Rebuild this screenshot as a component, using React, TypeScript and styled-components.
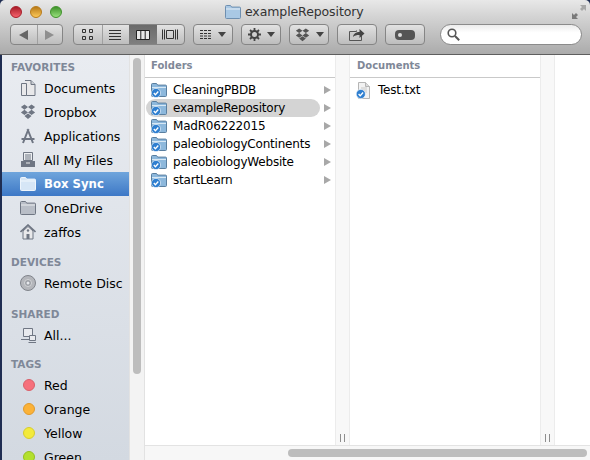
import React from 'react';
import styled, { createGlobalStyle } from 'styled-components';

const GlobalStyle = createGlobalStyle`
  html, body {
    margin: 0;
    padding: 0;
    height: 460px;
    overflow: hidden;
    background: #1f2d52;
  }
`;

const Window = styled.div`
  width: 590px;
  height: 460px;
  overflow: hidden;
  display: flex;
  flex-direction: column;
  font-family: 'DejaVu Sans', sans-serif;
  font-size: 12px;
  color: #000;
  border-radius: 5px 5px 0 0;
`;

const Header = styled.header`
  height: 55px;
  box-sizing: border-box;
  flex: none;
  background: linear-gradient(#e8e8e8, #d4d4d4 30%, #ababab);
  border-bottom: 1px solid #5e5e5e;
`;

const TitleRow = styled.div`
  height: 24px;
  display: flex;
  align-items: center;
  padding: 0 4px 1px 10px;
  box-sizing: border-box;
`;

const Lights = styled.div`
  display: flex;
  gap: 8px;
  width: 215px;
`;

const Light = styled.span<{ $color: string; $dark: string }>`
  width: 12px;
  height: 12px;
  border-radius: 50%;
  box-sizing: border-box;
  border: 1px solid ${({ $dark }) => $dark};
  background: linear-gradient(${({ $dark }) => $dark}, ${({ $color }) => $color});
`;

const Title = styled.div`
  display: flex;
  align-items: center;
  gap: 4px;
  font-size: 12.5px;
  letter-spacing: -0.1px;
  color: #333;
  flex: 1;
`;

const Toolbar = styled.div`
  display: flex;
  align-items: center;
  height: 21px;
  padding-left: 10px;
`;

const Group = styled.div<{ $width: number; $gap: number }>`
  width: ${({ $width }) => $width}px;
  height: 21px;
  margin-right: ${({ $gap }) => $gap}px;
  box-sizing: border-box;
  border: 1px solid #858585;
  border-radius: 4px;
  background: linear-gradient(#e2e2e2, #bdbdbd);
  display: flex;
  overflow: hidden;
`;

const Segment = styled.div<{ $active?: boolean; $line?: boolean }>`
  flex: 1;
  display: flex;
  align-items: center;
  justify-content: center;
  gap: 6px;
  background: ${({ $active }) =>
    $active ? 'linear-gradient(#6b6b6b, #7f7f7f)' : 'transparent'};
  box-shadow: ${({ $line }) => ($line ? '1px 0 0 #a0a0a0 inset' : 'none')};
`;

const Search = styled.div`
  width: 142px;
  height: 21px;
  margin-left: 6px;
  box-sizing: border-box;
  border: 1px solid #8b8b8b;
  border-radius: 11px;
  background: linear-gradient(#ececec, #fff 40%);
  display: flex;
  align-items: center;
  padding-left: 6px;
`;

const Body = styled.div`
  flex: 1;
  min-height: 0;
  display: flex;
  padding-left: 2px;
`;

const Sidebar = styled.nav`
  width: 127px;
  flex: none;
  background: linear-gradient(#e9ecf1, #d3d9e1);
  overflow: hidden;
`;

const SidebarTrack = styled.div`
  width: 16px;
  flex: none;
  box-sizing: border-box;
  padding: 3px 3px 0;
  background: #f3f3f3;
  border-left: 1px solid #e2e2e2;
  border-right: 1px solid #e2e2e2;
`;

const SidebarThumb = styled.div`
  height: 316px;
  border-radius: 4px;
  background: #bdbdbd;
`;

const SectionTitle = styled.h3`
  margin: 0;
  padding: 2px 0 0 9px;
  height: 21px;
  box-sizing: border-box;
  display: flex;
  align-items: center;
  font-size: 10.5px;
  font-weight: bold;
  color: #7f8898;
`;

const SideSection = styled.section<{ $after: number }>`
  margin-bottom: ${({ $after }) => $after}px;
`;

const SideItem = styled.div<{ $selected?: boolean }>`
  height: 24px;
  display: flex;
  align-items: center;
  padding-left: 18px;
  gap: 8px;
  background: ${({ $selected }) =>
    $selected ? 'linear-gradient(#6fa5dc, #3d78c6)' : 'transparent'};
  color: ${({ $selected }) => ($selected ? '#fff' : '#000')};
  font-weight: ${({ $selected }) => ($selected ? 'bold' : 'normal')};
  font-size: ${({ $selected }) => ($selected ? '11.7px' : '12.5px')};
  & > svg {
    flex: none;
  }
`;

const TagDot = styled.span<{ $color: string; $edge: string }>`
  width: 12px;
  height: 12px;
  margin: 0 1px 0 3px;
  border-radius: 50%;
  box-sizing: border-box;
  border: 1px solid ${({ $edge }) => $edge};
  background: ${({ $color }) => $color};
  flex: none;
`;

const Main = styled.div`
  flex: 1;
  min-width: 0;
  display: flex;
  flex-direction: column;
  background: #fff;
`;

const Columns = styled.div`
  flex: 1;
  min-height: 0;
  display: flex;
`;

const Column = styled.div`
  width: 190px;
  flex: none;
`;

const ColumnHeader = styled.div<{ $inset: number }>`
  height: 23px;
  box-sizing: border-box;
  padding-left: ${({ $inset }) => $inset}px;
  padding-bottom: 2px;
  display: flex;
  align-items: center;
  font-size: 10px;
  font-weight: bold;
  color: #7f8898;
  border-bottom: 1px solid #c9c9c9;
`;

const RowList = styled.div`
  padding: 3px 4px 0 1px;
`;

const Row = styled.div<{ $selected?: boolean }>`
  height: 18px;
  display: flex;
  align-items: center;
  padding-left: 5px;
  gap: 6px;
  position: relative;
  letter-spacing: -0.2px;
  &::before {
    content: '';
    display: ${({ $selected }) => ($selected ? 'block' : 'none')};
    position: absolute;
    left: 0;
    top: 0;
    width: 174px;
    height: 18px;
    border-radius: 9px;
    background: #d4d4d4;
  }
  & > * {
    position: relative;
  }
`;

const RowName = styled.span`
  flex: 1;
  white-space: nowrap;
`;

const Arrow = styled.span`
  width: 0;
  height: 0;
  margin-right: 0;
  border-left: 7px solid #a8a8a8;
  border-top: 4px solid transparent;
  border-bottom: 4px solid transparent;
`;

const Divider = styled.div`
  width: 15px;
  flex: none;
  box-sizing: border-box;
  background: #f8f8f8;
  border-left: 1px solid #ececec;
  border-right: 1px solid #ececec;
  display: flex;
  align-items: flex-end;
  justify-content: center;
  gap: 3px;
  padding-bottom: 3px;
`;

const Grip = styled.span`
  width: 1px;
  height: 8px;
  background: #8e8e8e;
`;

const HScroll = styled.div`
  height: 15px;
  flex: none;
  box-sizing: border-box;
  padding: 3px 3px 0 143px;
  background: #f7f7f7;
  border-top: 1px solid #e3e3e3;
`;

const HThumb = styled.div`
  height: 8px;
  border-radius: 4px;
  background: #bdbdbd;
`;

const ico = '#6f7683';

const FolderGlyph = ({ fill = '#a9c8e4', edge = '#6e8fb0' }: { fill?: string; edge?: string }) => (
  <svg width="16" height="14" viewBox="0 0 16 14">
    <path d="M.5 3V1.500a1 1 0 0 1 1-1h4l1.200 1.600h7.800a1 1 0 0 1 1 1V12.500a1 1 0 0 1-1 1h-13a1 1 0 0 1-1-1z" fill={fill} stroke={edge} />
    <path d="M1 4h14" stroke="#fff" strokeOpacity=".7" />
  </svg>
);

const Check = ({ x, y }: { x: number; y: number }) => (
  <g>
    <circle cx={x} cy={y} r="4.600" fill="#2f7fd0" stroke="#fff" strokeWidth=".6" />
    <path d={`M${x - 2.2} ${y}l1.600 1.700 2.900-3.200`} fill="none" stroke="#fff" strokeWidth="1.300" />
  </g>
);

const SyncFolder = () => (
  <svg width="16" height="16" viewBox="0 0 16 16">
    <path d="M.5 4V2.500a1 1 0 0 1 1-1h4l1.200 1.600h7.800a1 1 0 0 1 1 1v9.400a1 1 0 0 1-1 1h-13a1 1 0 0 1-1-1z" fill="#8db8dc" stroke="#5a7f9f" />
    <path d="M1 5.500h14" stroke="#d8e8f4" />
    <Check x={5} y={11} />
  </svg>
);

const SyncDoc = () => (
  <svg width="16" height="17" viewBox="0 0 16 17">
    <path d="M2.500.5h7l4 4v12h-11z" fill="#f2f2f2" stroke="#b5b5b5" />
    <path d="M9.500.5v4h4" fill="#dcdcdc" stroke="#b5b5b5" />
    <path d="M5 6h6M5 8h6M8 10h3" stroke="#c8c8c8" />
    <Check x={4.8} y={12} />
  </svg>
);

const DropboxGlyph = ({ color = ico, w = 16, h = 16 }: { color?: string; w?: number; h?: number }) => (
  <svg width={w} height={h} viewBox="0 0 18 16" fill={color} preserveAspectRatio="none">
    <path d="M5 .5 9 3 5 5.800 1 3zM13 .5 17 3l-4 2.800L9 3zM5 5.800 9 8.500 5 11 1 8.500zM13 5.800l4 2.700-4 2.500-4-2.500zM5 12l4-2.600L13 12l-4 3-4-3z" />
  </svg>
);

const favourites = [
  {
    name: 'Documents',
    icon: (
      <svg width="16" height="16" viewBox="0 0 16 16">
        <path d="M1.500 3.500h5v12h-5zM5 .5h6l4 4v11H6.500" fill="#e8e8ea" stroke={ico} />
        <path d="M11 .5v4h4" fill="#c8ccd2" stroke={ico} />
      </svg>
    ),
  },
  { name: 'Dropbox', icon: <DropboxGlyph /> },
  {
    name: 'Applications',
    icon: (
      <svg width="16" height="16" viewBox="0 0 16 16" fill="none" stroke={ico} strokeWidth="2">
        <path d="M8.500 1 3 15M7.500 1 13 15M1.500 11h13" />
      </svg>
    ),
  },
  {
    name: 'All My Files',
    icon: (
      <svg width="16" height="16" viewBox="0 0 16 16">
        <path d="M3.500.5h9v8h-9z" fill="#eceef1" stroke={ico} />
        <path d="M5 3h6M5 5h6M5 7h6" stroke={ico} />
        <path d="M1 9h14v6H1z" fill={ico} />
        <path d="M6 11h4" stroke="#eee" />
      </svg>
    ),
  },
  { name: 'Box Sync', selected: true, icon: <FolderGlyph fill="#d6e6f6" edge="#eef5fc" /> },
  { name: 'OneDrive', icon: <FolderGlyph fill="#b9bec7" edge="#6f7683" /> },
  {
    name: 'zaffos',
    icon: (
      <svg width="16" height="16" viewBox="0 0 16 16">
        <path d="M3 7v8h10V7L8 2.500z" fill="#e8e8ea" stroke={ico} />
        <path d="M.5 8 8 1l7.500 7" fill="none" stroke={ico} strokeWidth="1.600" />
        <path d="M6.500 10h3v5h-3z" fill={ico} />
        <circle cx="8" cy="6.500" r="1.200" fill={ico} />
      </svg>
    ),
  },
];

const folders = [
  'CleaningPBDB',
  'exampleRepository',
  'MadR06222015',
  'paleobiologyContinents',
  'paleobiologyWebsite',
  'startLearn',
];

const tags = [
  { name: 'Red', color: '#f6707c', edge: '#d9606a' },
  { name: 'Orange', color: '#fbb238', edge: '#e09a2c' },
  { name: 'Yellow', color: '#f3ea3c', edge: '#d6cd30' },
  { name: 'Green', color: '#b3e02e', edge: '#96c022' },
];

const Caret = () => (
  <svg width="8" height="5" viewBox="0 0 8 5">
    <path d="M0 0h8L4 5z" fill="#444" />
  </svg>
);

export default function App() {
  return (
    <>
      <GlobalStyle />
      <Window>
        <Header>
          <TitleRow>
            <Lights>
              <Light $color="#f5626c" $dark="#a81c28" />
              <Light $color="#fcc858" $dark="#b87a18" />
              <Light $color="#98e07c" $dark="#3f922a" />
            </Lights>
            <Title>
              <FolderGlyph />
              exampleRepository
            </Title>
            <svg width="14" height="14" viewBox="0 0 14 14">
              <path d="M8 0h6v6l-2-2-2 2-2-2 2-2z" fill="#a8a8a8" />
              <path d="M6 14H0V8l2 2 2-2 2 2-2 2z" fill="#7a7a7a" />
            </svg>
          </TitleRow>
          <Toolbar>
            <Group $width={53} $gap={10}>
              <Segment>
                <svg width="9" height="10" viewBox="0 0 9 10"><path d="M9 0v10L0 5z" fill="#666" /></svg>
              </Segment>
              <Segment $line>
                <svg width="9" height="10" viewBox="0 0 9 10"><path d="M0 0v10l9-5z" fill="#8f8f8f" /></svg>
              </Segment>
            </Group>
            <Group $width={112} $gap={8}>
              <Segment>
                <svg width="11" height="11" viewBox="0 0 11 11" fill="none" stroke="#333">
                  <path d="M.5.500h3v3h-3zM7.500.500h3v3h-3zM.5 7.500h3v3h-3zM7.500 7.500h3v3h-3z" />
                </svg>
              </Segment>
              <Segment $line>
                <svg width="12" height="11" viewBox="0 0 12 11" stroke="#333">
                  <path d="M0 1.500h12M0 4.500h12M0 7.500h12M0 10.500h12" />
                </svg>
              </Segment>
              <Segment $active>
                <svg width="14" height="10" viewBox="0 0 14 10" fill="#e8e8e8" stroke="#222">
                  <path d="M.5.500h13v9H.5zM4.800.500v9M9.200.500v9" />
                </svg>
              </Segment>
              <Segment>
                <svg width="16" height="11" viewBox="0 0 16 11" fill="none" stroke="#333">
                  <path d="M.5.500v10M2.500.500v10M13.500.500v10M15.500.500v10M4.500 1.500h7v8h-7z" />
                </svg>
              </Segment>
            </Group>
            <Group $width={40} $gap={8}>
              <Segment>
                <svg width="12" height="11" viewBox="0 0 12 11" stroke="#333" fill="none">
                  <path d="M0 1.500h12M0 4.500h12M0 7h12M0 9.500h12" strokeDasharray="3 1" />
                </svg>
                <Caret />
              </Segment>
            </Group>
            <Group $width={40} $gap={8}>
              <Segment>
                <svg width="13" height="13" viewBox="0 0 13 13">
                  <circle cx="6.500" cy="6.500" r="3.500" fill="none" stroke="#444" strokeWidth="2" />
                  <path d="M6.500 0v3M6.500 10v3M0 6.500h3M10 6.500h3M2 2l2 2M9 9l2 2M2 11l2-2M9 4l2-2" stroke="#444" strokeWidth="1.800" />
                </svg>
                <Caret />
              </Segment>
            </Group>
            <Group $width={40} $gap={8}>
              <Segment>
                <DropboxGlyph color="#555" w={15} h={14} />
                <Caret />
              </Segment>
            </Group>
            <Group $width={40} $gap={8}>
              <Segment>
                <svg width="16" height="13" viewBox="0 0 16 13">
                  <path d="M.5 3.500h7v-1M12.500 8v4.500H.5v-9" fill="#c8c8c8" stroke="#555" />
                  <path d="M4 9c.5-3.500 3-5 6.500-5V1l5 4.500-5 4.500V7c-3 0-5 .5-6.500 2z" fill="#444" />
                </svg>
              </Segment>
            </Group>
            <Group $width={40} $gap={9}>
              <Segment>
                <svg width="20" height="10" viewBox="0 0 20 10">
                  <rect width="20" height="10" rx="4" fill="#555" />
                  <circle cx="5" cy="5" r="2" fill="#ddd" />
                </svg>
              </Segment>
            </Group>
            <Search>
              <svg width="13" height="13" viewBox="0 0 13 13" fill="none" stroke="#555" strokeWidth="1.600">
                <circle cx="5" cy="5" r="3.800" />
                <path d="M8 8l4.200 4.200" strokeWidth="2" />
              </svg>
            </Search>
          </Toolbar>
        </Header>
        <Body>
          <Sidebar>
            <SideSection $after={6}>
              <SectionTitle>FAVORITES</SectionTitle>
              {favourites.map((item) => (
                <SideItem key={item.name} $selected={item.selected}>
                  {item.icon}
                  {item.name}
                </SideItem>
              ))}
            </SideSection>
            <SideSection $after={7}>
              <SectionTitle>DEVICES</SectionTitle>
              <SideItem>
                <svg width="16" height="16" viewBox="0 0 16 16">
                  <circle cx="8" cy="8" r="7.500" fill="#b4b6bb" stroke="#80848b" />
                  <circle cx="8" cy="8" r="3.500" fill="#9a9da3" stroke="#d4d5d8" />
                  <circle cx="8" cy="8" r="1.500" fill="#e6e8ec" />
                </svg>
                Remote Disc
              </SideItem>
            </SideSection>
            <SideSection $after={5}>
              <SectionTitle>SHARED</SectionTitle>
              <SideItem>
                <svg width="16" height="16" viewBox="0 0 16 16" fill="#e8eaee" stroke={ico}>
                  <path d="M3.500 1.500h9v8h-9zM1 12.500h8" />
                  <path d="M9.500 8.500h6v5h-6zM8.500 15.500h8" />
                </svg>
                All...
              </SideItem>
            </SideSection>
            <SideSection $after={0}>
              <SectionTitle>TAGS</SectionTitle>
              {tags.map((tag) => (
                <SideItem key={tag.name}>
                  <TagDot $color={tag.color} $edge={tag.edge} />
                  {tag.name}
                </SideItem>
              ))}
            </SideSection>
          </Sidebar>
          <SidebarTrack>
            <SidebarThumb />
          </SidebarTrack>
          <Main>
            <Columns>
              <Column>
                <ColumnHeader $inset={6}>Folders</ColumnHeader>
                <RowList>
                  {folders.map((name) => (
                    <Row key={name} $selected={name === 'exampleRepository'}>
                      <SyncFolder />
                      <RowName>{name}</RowName>
                      <Arrow />
                    </Row>
                  ))}
                </RowList>
              </Column>
              <Divider>
                <Grip />
                <Grip />
              </Divider>
              <Column>
                <ColumnHeader $inset={7}>Documents</ColumnHeader>
                <RowList>
                  <Row>
                    <SyncDoc />
                    <RowName>Test.txt</RowName>
                  </Row>
                </RowList>
              </Column>
              <Divider>
                <Grip />
                <Grip />
              </Divider>
            </Columns>
            <HScroll>
              <HThumb />
            </HScroll>
          </Main>
        </Body>
      </Window>
    </>
  );
}
